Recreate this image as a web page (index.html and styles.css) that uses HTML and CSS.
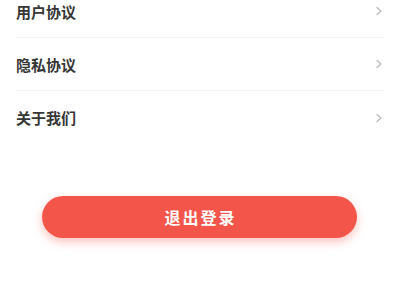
FILE: index.html
```html
<!DOCTYPE html>
<html lang="zh-CN">
  <head>
    <meta charset="UTF-8" />
    <meta name="viewport" content="width=device-width, initial-scale=1.0" />
    <title>设置</title>
    <link rel="stylesheet" href="styles.css">
  </head>
  <body>
    <div class="page">
      <ul class="menu">
        <li class="menu-item">
          <span class="label">用户协议</span>
          <span class="arrow"><svg width="8" height="10" viewBox="0 0 8 10"><path d="M2 1.5 L6 5 L2 8.5" fill="none" stroke="#b8b8b8" stroke-width="1.2" stroke-linecap="round" stroke-linejoin="round"/></svg></span>
        </li>
        <li class="menu-item">
          <span class="label">隐私协议</span>
          <span class="arrow"><svg width="8" height="10" viewBox="0 0 8 10"><path d="M2 1.5 L6 5 L2 8.5" fill="none" stroke="#b8b8b8" stroke-width="1.2" stroke-linecap="round" stroke-linejoin="round"/></svg></span>
        </li>
        <li class="menu-item">
          <span class="label">关于我们</span>
          <span class="arrow"><svg width="8" height="10" viewBox="0 0 8 10"><path d="M2 1.5 L6 5 L2 8.5" fill="none" stroke="#b8b8b8" stroke-width="1.2" stroke-linecap="round" stroke-linejoin="round"/></svg></span>
        </li>
      </ul>
      <div class="logout-wrap">
        <button class="logout">退出登录</button>
      </div>
    </div>
  </body>
</html>
```

FILE: styles.css
```css
* {
  padding: 0;
  margin: 0;
  box-sizing: border-box;
}
body {
  background-color: #fff;
  font-family: "Noto Sans CJK SC", "Noto Sans", sans-serif;
  width: 400px;
  height: 300px;
  overflow: hidden;
}
.page {
  margin-top: -15px;
}
.menu {
  list-style: none;
  padding: 0 16px 0 15px;
}
.menu-item {
  display: flex;
  align-items: center;
  justify-content: space-between;
  height: 53px;
  border-bottom: 1px solid #f4f2f4;
}
.menu-item:last-child {
  border-bottom: none;
}
.label {
  font-size: 15px;
  font-weight: 700;
  color: #363636;
  padding-left: 1px;
}
.arrow {
  display: flex;
  align-items: center;
  margin-right: 1px;
}
.logout-wrap {
  padding: 52px 43px 0 42px;
}
.logout {
  display: block;
  width: 100%;
  height: 42px;
  border: none;
  border-radius: 21px;
  background-color: #f4554a;
  color: #fff;
  font-family: "Noto Sans CJK SC", sans-serif;
  font-size: 16px;
  font-weight: 700;
  letter-spacing: 2px;
  text-indent: 2px;
  box-shadow: 0 4px 10px rgba(244, 85, 74, 0.35);
}
```
